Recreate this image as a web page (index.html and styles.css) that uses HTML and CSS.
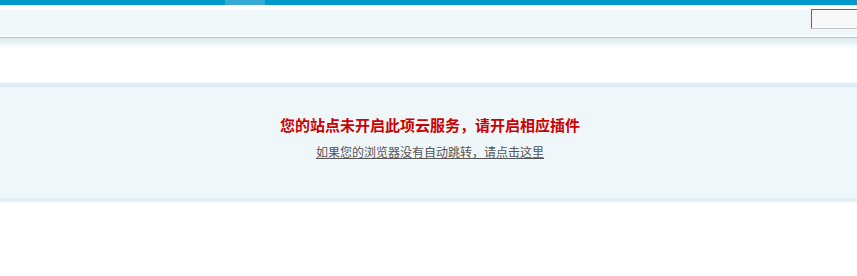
FILE: index.html
```html
<!DOCTYPE html>
<html lang="zh-CN">
<head>
    <meta charset="UTF-8">
    <title>提示信息</title>
    <link rel="stylesheet" href="styles.css">
</head>
<body>
    <!-- 顶部导航 -->
    <div class="topbar">
        <span class="topbar-tab"></span>
    </div>
    <div class="header">
        <input type="text" class="search-input">
    </div>
    <div class="header-line"></div>

    <!-- 提示信息 -->
    <div class="notice">
        <p class="notice-title">您的站点未开启此项云服务，请开启相应插件</p>
        <p class="notice-link"><a href="#">如果您的浏览器没有自动跳转，请点击这里</a></p>
    </div>
</body>
</html>
```

FILE: styles.css
```css
html, body {
    margin: 0;
    padding: 0;
    overflow: hidden;
}
body {
    background: #fff;
    font-family: "Noto Sans CJK SC", "DejaVu Sans", sans-serif;
    font-size: 12px;
}

/* top bar */
.topbar {
    height: 5px;
    background: #0099cc;
}
.topbar-tab {
    display: block;
    margin-left: 225px;
    width: 40px;
    height: 5px;
    background: #36aad5;
}

.header {
    height: 30px;
    display: flex;
    justify-content: flex-end;
    align-items: flex-start;
    background: linear-gradient(#fff 0, #fff 5px, #f0f7fb 5px, #f0f7fb 30px);
    border-bottom: 2px solid #fff;
}
.search-input {
    box-sizing: border-box;
    margin: 4px -20px 0 0;
    width: 66px;
    height: 20px;
    padding: 0;
    border: 1px solid;
    border-color: #666 #ccc #c4c4c4 #666;
    background: #f8f8f8;
}
.header-line {
    height: 10px;
    border-top: 1px solid #adc8d7;
    background: linear-gradient(#dae8f0, #fff);
}

/* notice box */
.notice {
    margin-top: 35px;
    height: 111px;
    background: #f0f7fb;
    border-top: 4px solid #deedf8;
    border-bottom: 4px solid #deedf8;
    text-align: center;
    padding-left: 3px;
}
.notice p {
    margin: 0;
}
.notice .notice-title {
    padding-top: 29px;
    font-size: 15px;
    line-height: 18px;
    font-weight: bold;
    color: #cc0000;
}
.notice .notice-link {
    padding-top: 9px;
    line-height: 18px;
}
.notice-link a {
    color: #555;
    text-decoration: underline;
}
```
